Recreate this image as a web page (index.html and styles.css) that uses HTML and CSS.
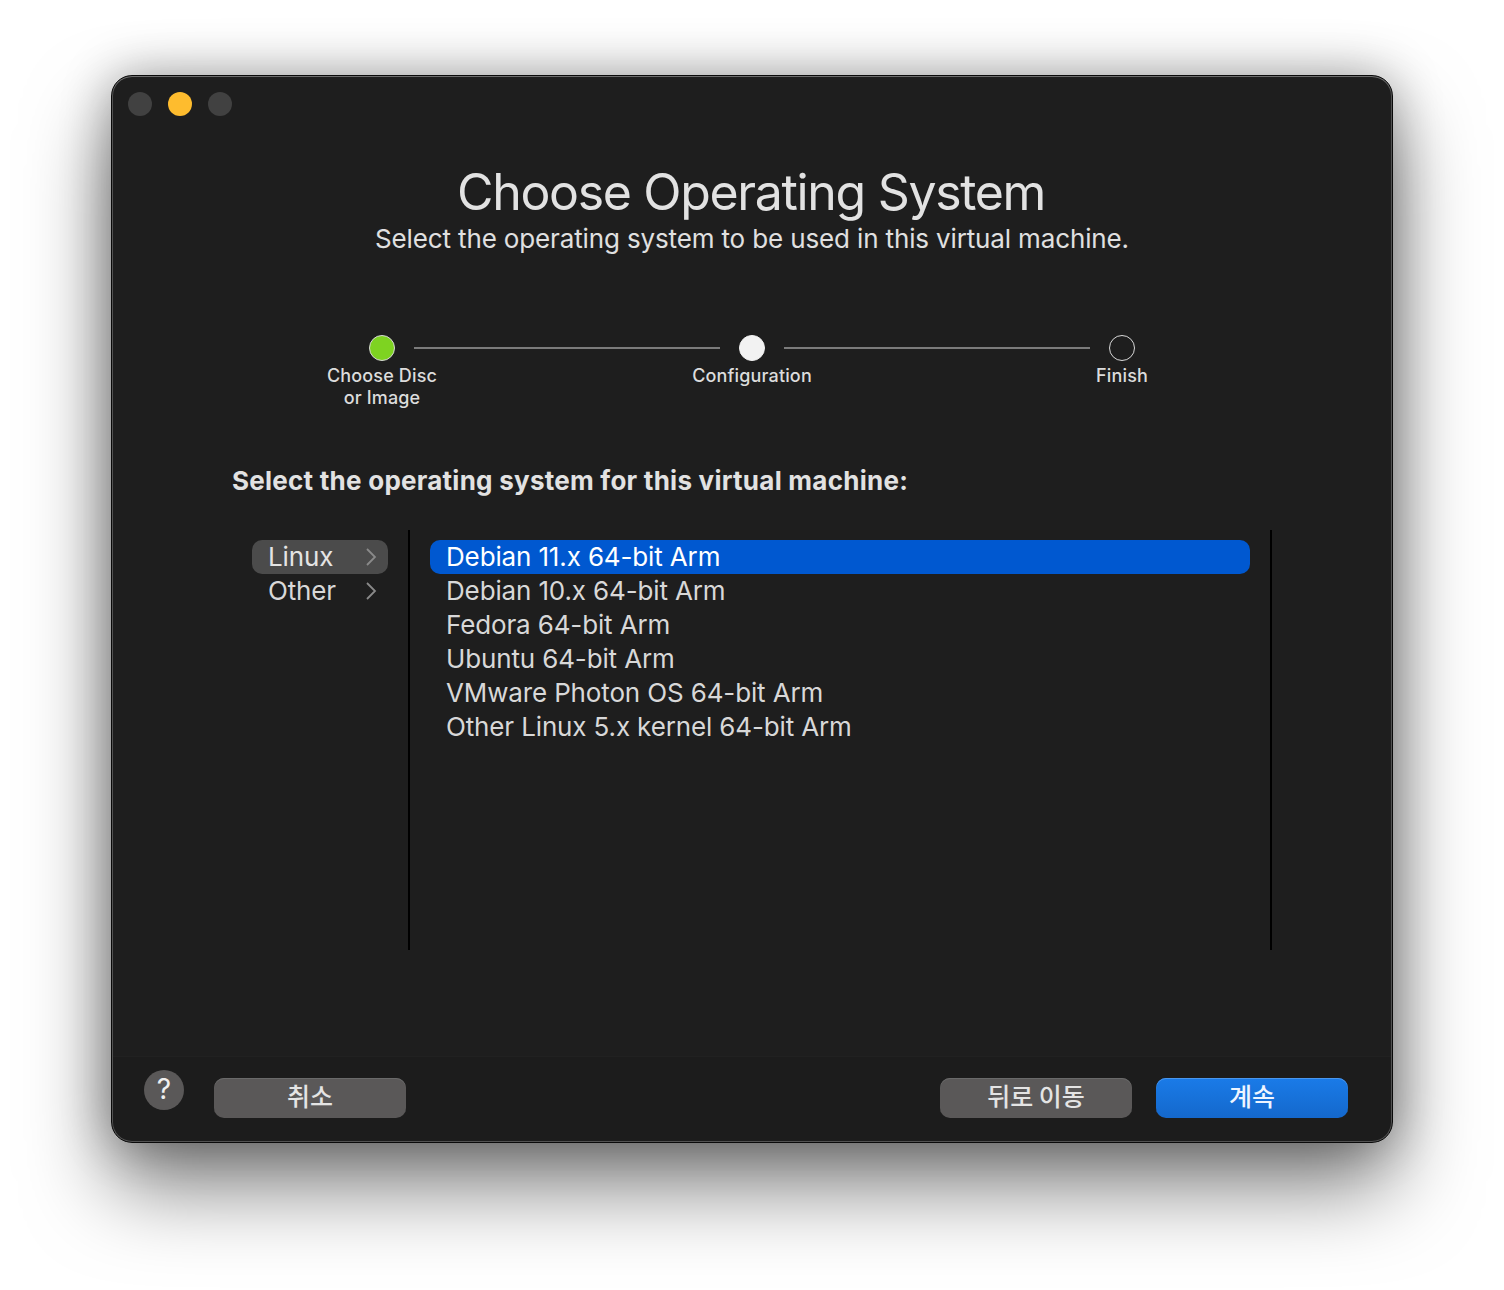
FILE: index.html
```html
<!DOCTYPE html>
<html lang="en">
<head>
<meta charset="utf-8">
<title>Choose Operating System</title>
<link rel="stylesheet" href="styles.css">
</head>
<body>
<main class="window">
  <div class="lights">
    <span class="light"></span>
    <span class="light light-min"></span>
    <span class="light"></span>
  </div>
  <header class="head">
    <h1 class="title">Choose Operating System</h1>
    <p class="subtitle">Select the operating system to be used in this virtual machine.</p>
  </header>
  <div class="track">
    <span class="dot dot-done"></span>
    <span class="line"></span>
    <span class="dot dot-current"></span>
    <span class="line"></span>
    <span class="dot"></span>
  </div>
  <div class="labels">
    <span class="label">Choose Disc<br>or Image</span>
    <span class="label">Configuration</span>
    <span class="label">Finish</span>
  </div>
  <h2 class="prompt">Select the operating system for this virtual machine:</h2>
  <div class="browser">
    <ul class="families">
      <li class="family family-on">Linux<svg class="chev" viewBox="0 0 12 20"><path d="M2 2l8 8-8 8"/></svg></li>
      <li class="family">Other<svg class="chev" viewBox="0 0 12 20"><path d="M2 2l8 8-8 8"/></svg></li>
    </ul>
    <ul class="systems">
      <li class="system system-on">Debian 11.x 64-bit Arm</li>
      <li class="system">Debian 10.x 64-bit Arm</li>
      <li class="system">Fedora 64-bit Arm</li>
      <li class="system">Ubuntu 64-bit Arm</li>
      <li class="system">VMware Photon OS 64-bit Arm</li>
      <li class="system">Other Linux 5.x kernel 64-bit Arm</li>
    </ul>
  </div>
  <footer class="foot">
    <button class="help">?</button>
    <button class="btn btn-cancel">취소</button>
    <span class="spacer"></span>
    <button class="btn">뒤로 이동</button>
    <button class="btn btn-primary">계속</button>
  </footer>
</main>
</body>
</html>
```
FILE: styles.css
```css
* { box-sizing: border-box; }
html, body { margin: 0; height: 100%; }
body {
  background: #fff;
  padding: 75px 111px 0;
  overflow: hidden;
  font-family: Inter, "Noto Sans CJK KR", "Liberation Sans", sans-serif;
  color: #dcdcdc;
}
.window {
  width: 1282px;
  height: 1068px;
  background: linear-gradient(#1e1e1e 980px, #1c1c1c 980px);
  border-radius: 21px;
  border: 1px solid #0a0a0a;
  box-shadow: inset 0 1px 0 #6c6c6c, inset 0 0 0 1px #525252, 0 44px 84px rgba(0,0,0,.5), 0 0 50px rgba(0,0,0,.32);
  display: flex;
  flex-direction: column;
  padding-top: 16px;
}
.lights { display: flex; gap: 16px; padding-left: 16px; }
.light { width: 24px; height: 24px; border-radius: 50%; background: #414141; }
.light-min { background: #febc2e; }
.head { text-align: center; margin-top: 45px; }
.title { margin: 0; font-size: 50px; line-height: 62px; font-weight: 400; color: #e2e2e2; letter-spacing: -1.33px; position: relative; left: -1px; }
.subtitle { margin: 0; font-size: 26px; line-height: 32px; font-weight: 400; color: #e0e0e0; letter-spacing: -.14px; }
.track { display: flex; align-items: center; margin: 80px 0 0 257px; }
.dot { width: 26px; height: 26px; border-radius: 50%; border: 1px solid #d8d8d8; }
.dot-done { background: #7ed321; }
.dot-current { background: #f2f2f2; border-color: #f2f2f2; }
.line { width: 306px; height: 2px; background: #7b7b7b; margin: 0 19px; }
.labels { display: grid; grid-template-columns: repeat(3, 370px); margin: 4px 0 0 85px; }
.label { text-align: center; font-size: 18px; line-height: 22px; font-weight: 500; color: #dcdcdc; letter-spacing: .15px; }
.prompt { margin: 56px 0 0 120px; font-size: 26px; line-height: 32px; font-weight: 700; color: #e2e2e2; letter-spacing: .25px; }
.browser { display: flex; height: 420px; margin: 33px 0 0 120px; }
.families, .systems { list-style: none; margin: 0; padding: 10px 20px; }
.families { width: 176px; }
.systems { width: 864px; border-left: 2px solid #000; border-right: 2px solid #000; }
.family, .system { height: 34px; line-height: 34px; font-size: 26px; padding-left: 16px; border-radius: 10px; color: #d8d8d8; letter-spacing: -.14px; }
.family { display: flex; align-items: center; justify-content: space-between; padding-right: 11px; }
.family-on { background: #4b4b4b; color: #e4e4e4; }
.system-on { background: #0058d0; color: #fff; }
.chev { width: 12px; height: 20px; fill: none; stroke: #8a8a8a; stroke-width: 1.8; }
.foot {
  margin: 106px 1px 0;
  border-top: 1px solid #212121;
  display: flex;
  align-items: flex-start;
  padding: 13px 43px 0 31px;
  flex: 1;
}
.help {
  width: 40px; height: 40px; border-radius: 50%; border: 0; padding: 0 0 3px;
  background: #5a5858; color: #efefef; font: 400 28px/36px Inter, sans-serif;
}
.btn {
  width: 192px; height: 40px; margin-top: 8px; border: 0; border-radius: 10px;
  background: #5a5858; box-shadow: inset 0 1px 0 #6a6a6a; color: #e4e4e4; padding: 0 0 6px;
  font: 500 25px/34px "Noto Sans CJK KR", sans-serif;
}
.btn-cancel { margin-left: 30px; }
.btn-primary { margin-left: 24px; background: linear-gradient(#1a7be8, #1468cc); box-shadow: inset 0 1px 0 #4a97ee; color: #eef5ff; }
.spacer { flex: 1; }
```
